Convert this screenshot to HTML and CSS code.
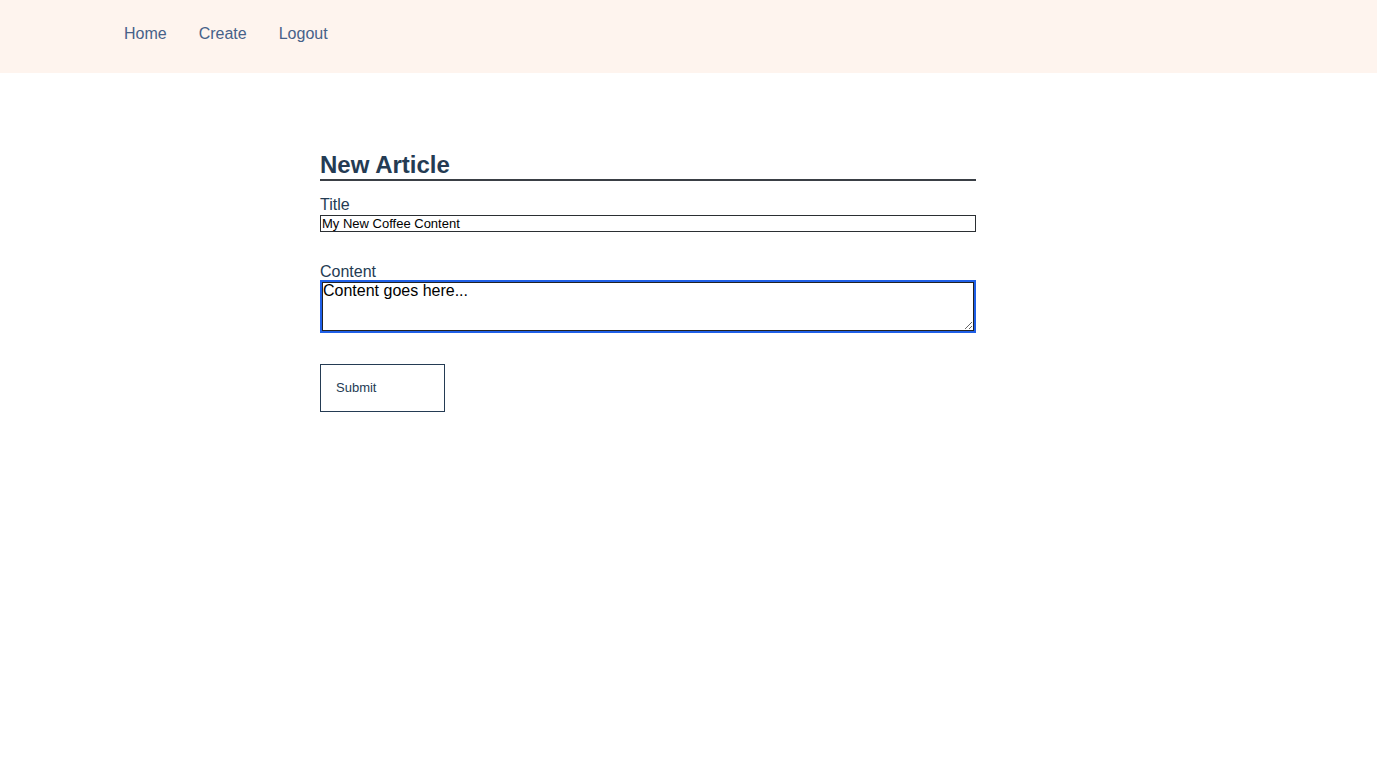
FILE: index.html
```html
<!DOCTYPE html>
<html lang="en">
<head>
<meta charset="utf-8">
<title>New Article</title>
<link rel="stylesheet" href="styles.css">
</head>
<body>
<header class="topbar">
  <nav class="nav">
    <a class="nav-link" href="#">Home</a>
    <a class="nav-link" href="#">Create</a>
    <a class="nav-link" href="#">Logout</a>
  </nav>
</header>
<main class="main">
  <form class="article-form">
    <h2 class="form-title">New Article</h2>
    <label class="field-label" for="title">Title</label>
    <input class="text-input" id="title" type="text" value="My New Coffee Content">
    <label class="field-label content-label" for="content">Content</label>
    <textarea class="text-area" id="content">Content goes here...</textarea>
    <button class="submit-btn" type="button">Submit</button>
  </form>
</main>
</body>
</html>
```

FILE: styles.css
```css
* { box-sizing: border-box; }
html, body {
  margin: 0;
  padding: 0;
  background: #ffffff;
  font-family: "Liberation Sans", Arial, Helvetica, sans-serif;
}
.topbar {
  background: #fef4ee;
  height: 73px;
}
.nav {
  display: flex;
  gap: 32px;
  padding: 25px 0 0 124px;
}
.nav-link {
  color: #466189;
  text-decoration: none;
  font-size: 16px;
  line-height: 18px;
}
.main {
  display: flex;
  justify-content: flex-start;
  padding: 78px 0 0 320px;
}
.article-form {
  width: 656px;
  display: flex;
  flex-direction: column;
  align-items: flex-start;
}
.form-title {
  margin: 0;
  width: 100%;
  font-size: 24px;
  line-height: 28px;
  font-weight: bold;
  color: #243b53;
  border-bottom: 2px solid #3a3f45;
}
.field-label {
  margin-top: 15px;
  font-size: 16px;
  line-height: 18px;
  color: #243b53;
}
.content-label {
  margin-top: 31px;
}
.text-input {
  margin-top: 1px;
  width: 100%;
  height: 17px;
  padding: 0 1px;
  border: 1px solid #2b2f33;
  font-family: "Liberation Sans", Arial, sans-serif;
  font-size: 13px;
  line-height: 15px;
  color: #000;
  background: #fff;
  outline: none;
}
.text-area {
  margin: 1px 2px 0 2px;
  width: calc(100% - 4px);
  height: 49px;
  padding: 0;
  border: 1px solid #222;
  box-shadow: 0 0 0 2px #1f5fe6;
  font-family: "Liberation Sans", Arial, sans-serif;
  font-size: 16px;
  line-height: 16px;
  color: #000;
  background: #fff;
  resize: both;
  outline: none;
}
.submit-btn {
  margin-top: 33px;
  width: 125px;
  height: 48px;
  padding: 0 0 2px 15px;
  text-align: left;
  background: #fff;
  border: 1px solid #243b53;
  color: #243b53;
  font-family: "Liberation Sans", Arial, sans-serif;
  font-size: 13px;
  cursor: pointer;
}
```
